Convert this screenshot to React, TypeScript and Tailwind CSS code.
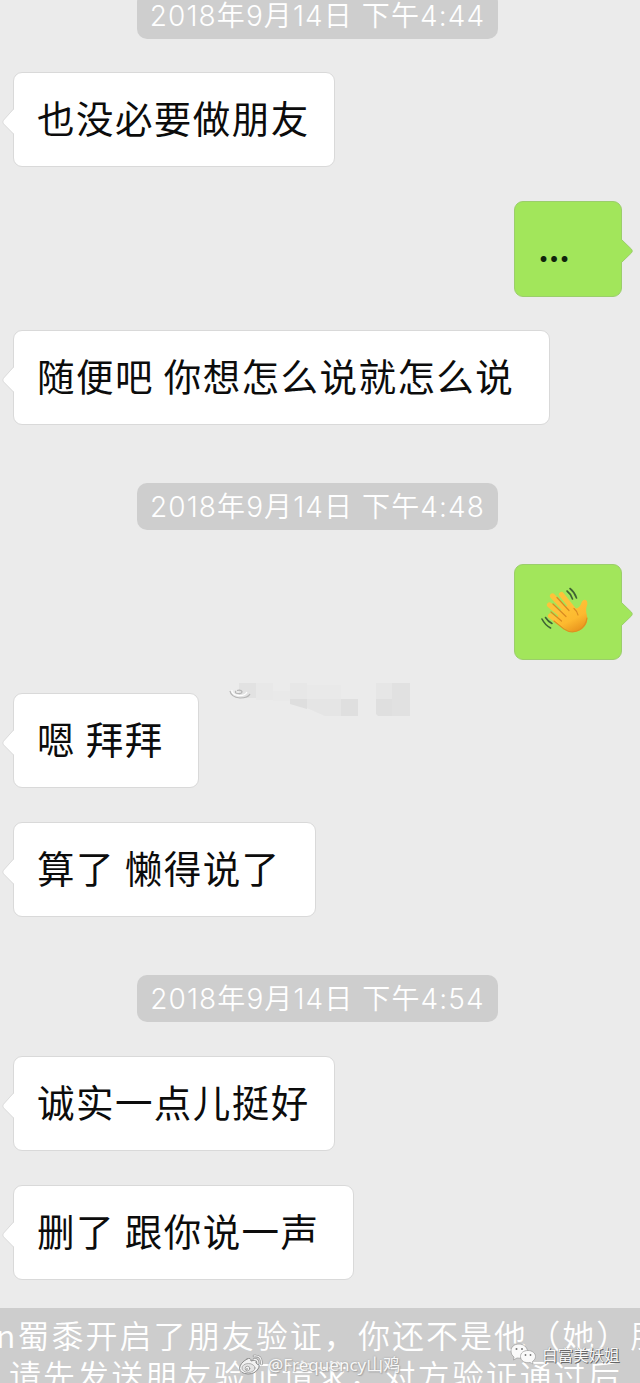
import clsx from 'clsx'

type Item =
  | { kind: 'time'; text: string; gap: string }
  | { kind: 'in'; text: string; gap: string; width: string }
  | { kind: 'out'; text?: string; gap: string }

const ITEMS: Item[] = [
  { kind: 'time', text: '2018年9月14日 下午4:44', gap: '-mt-2' },
  { kind: 'in', text: '也没必要做朋友', gap: 'mt-[33px]', width: 'w-[322px]' },
  { kind: 'out', text: '...', gap: 'mt-[34px]' },
  { kind: 'in', text: '随便吧 你想怎么说就怎么说', gap: 'mt-[33px]', width: 'w-[537px]' },
  { kind: 'time', text: '2018年9月14日 下午4:48', gap: 'mt-[58px]' },
  { kind: 'out', gap: 'mt-[33.5px]' },
  { kind: 'in', text: '嗯 拜拜', gap: 'mt-[33.5px]', width: 'w-[186px]' },
  { kind: 'in', text: '算了 懒得说了', gap: 'mt-[34px]', width: 'w-[303px]' },
  { kind: 'time', text: '2018年9月14日 下午4:54', gap: 'mt-[58px]' },
  { kind: 'in', text: '诚实一点儿挺好', gap: 'mt-[34px]', width: 'w-[322px]' },
  { kind: 'in', text: '删了 跟你说一声', gap: 'mt-[34px]', width: 'w-[341px]' },
]

function TimeLabel({ text, gap }: { text: string; gap: string }) {
  return (
    <div
      className={clsx(
        'ml-[137px] w-[361px] h-[47px] shrink-0 rounded-[10px] bg-[#cecece] flex items-center justify-center',
        "font-['Inter','Noto_Sans_CJK_SC',sans-serif] font-[350] text-[28px] tracking-[1.1px] text-white whitespace-nowrap",
        gap,
      )}
    >
      {text}
    </div>
  )
}

function Incoming({ text, gap, width }: { text: string; gap: string; width: string }) {
  return (
    <div
      className={clsx(
        'relative ml-[13px] h-[95px] shrink-0 rounded-[9px] bg-white border border-[#d9d9d9] pl-[23px] pb-1 flex items-center',
        'text-[37.5px] tracking-[1.45px] text-[#0c0c0c] whitespace-nowrap',
        width,
        gap,
      )}
    >
      <svg className="absolute -left-3 top-[34px] w-[13px] h-[30px]" viewBox="0 0 13 30">
        <path d="M13 1 L1.5 13.2 Q0 15 1.5 16.8 L13 28Z" fill="#fff" />
        <path d="M11.5 2 L1.5 13.2 Q0 15 1.5 16.8 L11.5 27" fill="none" stroke="#dcdcdc" />
      </svg>
      {text}
    </div>
  )
}

function WavingHand() {
  return (
    <svg className="ml-[2px] w-12 h-12" viewBox="0 0 48 48" fill="none" strokeLinecap="round">
      <defs>
        <linearGradient id="skin" x1="0" y1="0" x2="0.5" y2="1">
          <stop offset="0" stopColor="#ffc83c" />
          <stop offset="0.7" stopColor="#fdb92f" />
          <stop offset="1" stopColor="#ec9a20" />
        </linearGradient>
      </defs>
      <g stroke="#fec23a" strokeWidth="5.200">
        <path d="M20.500 7.500 L32 22" />
        <path d="M11.500 9 L27 26" />
        <path d="M8.500 18 L24 31" />
        <path d="M9.500 29 L22 38" />
      </g>
      <path
        d="M20 23 L29 17 L32.500 21 Q37 22.500 39.500 18 L41 14.500 Q43 11.500 46 14 Q47 16 45.500 20 Q44.500 23 46 29 Q47.500 37 41 42 Q33 48 24 42 L15 33Z"
        fill="url(#skin)"
      />
      <g stroke="#d98a22" strokeWidth="1.200">
        <path d="M16 10.500 L28 23.500" />
        <path d="M12 17 L25 29.500" />
        <path d="M10 25 L20.500 34" />
        <path d="M33 21.500 Q36.500 24.500 37 28" />
      </g>
      <path d="M13 34 L23 42 Q31 47.500 39 42.500 Q45 38.500 46 31" stroke="#e0901f" strokeWidth="1.200" />
      <g stroke="#3f6234" strokeWidth="1.600">
        <path d="M26 4 Q30 7 31.500 12" />
        <path d="M29 1.500 Q33.500 5 35.500 11" />
        <path d="M4.500 30.500 Q7 34.500 11 36.500" />
        <path d="M1 32 Q4 38 9.500 41" />
      </g>
    </svg>
  )
}

function Outgoing({ text, gap }: { text?: string; gap: string }) {
  return (
    <div
      className={clsx(
        'relative ml-[514px] w-[108px] h-24 shrink-0 rounded-[9px] bg-[#a2e65b] border border-[#9bce6b] pl-6 pb-px flex items-center',
        'text-[37px] text-[#10240c]',
        gap,
      )}
    >
      <svg className="absolute -right-3 top-[34px] w-[13px] h-[30px]" viewBox="0 0 13 30">
        <path d="M0 2 L11.500 13.200 Q13 15 11.500 16.800 L0 28Z" fill="#a2e65b" />
        <path d="M1 3 L11.500 13.200 Q13 15 11.500 16.800 L1 27" fill="none" stroke="#9bce6b" />
      </svg>
      {text ? <span className="-ml-px pb-[3px] font-medium tracking-[-0.5px]">{text}</span> : <WavingHand />}
    </div>
  )
}

function Mosaic() {
  return (
    <svg className="absolute left-[228px] top-[680px] w-[186px] h-10" viewBox="0 0 186 40">
      <path d="M11 3h17v15h-17z" fill="#e2e2e2" />
      <path d="M28 3h17v17h-17z" fill="#e8e8e8" />
      <path d="M45 11h17v10h-17z" fill="#e9e9e9" />
      <path d="M62 3h17v16h-17z" fill="#e7e7e7" />
      <path d="M79 5h34v14h-34z" fill="#e9e9e9" />
      <path d="M62 19h17v10l-17 -5z" fill="#dedede" />
      <path d="M79 19h34v17h-16l-18 -8z" fill="#e5e5e5" />
      <path d="M113 19h17v17h-17z" fill="#dfdfdf" />
      <path d="M148 3h16v16h-16z" fill="#e6e6e6" />
      <path d="M148 19h16v17h-14l-2 -2z" fill="#dfdfdf" />
      <path d="M164 3h18v33h-18z" fill="#e1e1e1" />
      <g fill="none" stroke="#b5b5b5" strokeWidth="1.200">
        <path d="M2 11 Q3 17 12 18 Q20 18 22 14" />
        <path d="M4 10 Q3 14 10 15.500 Q17 16 19 12" stroke="#fff" />
        <path d="M8 11 Q6 13 10 13.500 Q14 14 14 11.500 Q13 9.500 9 10.500" />
      </g>
    </svg>
  )
}

function WeiboMark() {
  return (
    <div className="absolute left-[238px] top-[1354px] flex items-center gap-1 text-[17px] leading-[22px] text-[#f8f8f8] whitespace-nowrap font-['Noto_Sans','Noto_Sans_CJK_SC',sans-serif] [text-shadow:0_0_2px_#999,1px_1px_1px_#aaa]">
      <svg className="w-[26px] h-[22px]" viewBox="0 0 26 22" fill="none" stroke="#8c8c8c" strokeLinecap="round">
        <path
          d="M9 5 Q13 3 13 7 Q19 5 18 9 Q23 11 20 15 Q17 20 10 20 Q2 19.500 1.500 14.500 Q2 9 9 5Z"
          fill="#f2f2f2"
        />
        <ellipse cx="10.500" cy="14" rx="6.500" ry="4.500" fill="#e4e4e4" strokeWidth="0.600" />
        <circle cx="9.500" cy="14.500" r="2.300" fill="#f7f7f7" strokeWidth="0.700" />
        <circle cx="9" cy="15" r="0.800" fill="#777" stroke="none" />
        <path d="M16 5.500 Q20 5 20 9.500 M16 2 Q24 1 23.500 10" stroke="#888" strokeWidth="2.500" />
        <path d="M16 5.500 Q20 5 20 9.500 M16 2 Q24 1 23.500 10" stroke="#f2f2f2" strokeWidth="1.400" />
      </svg>
      @Frequency山鸡
    </div>
  )
}

function WechatMark() {
  return (
    <div className="absolute left-[510px] top-[1342px] flex items-center gap-[6px] text-[15.500px] leading-[24px] text-[#f8f8f8] whitespace-nowrap [text-shadow:1px_1px_0_#666,0_0_1px_#777]">
      <svg className="w-[26px] h-6" viewBox="0 0 26 24" fill="#fafafa" stroke="#999" strokeWidth="0.700">
        <path d="M9 2 C4 2 1 5 1 9 C1 12 2.500 14 4 15 L3.500 18 L7 16 C13 17 18 14 17.500 9 C17 5 13.500 2 9 2Z" />
        <path d="M18 8.500 C13.500 8.500 10.500 11 10.500 14.500 C10.500 19 15 21.500 20 20.500 L23 22 L22.500 19.500 C24.500 18 25.500 16.500 25.500 14.500 C25.500 11 22 8.500 18 8.500Z" />
        <g fill="#777" stroke="none">
          <circle cx="6.500" cy="7" r="1" />
          <circle cx="12" cy="7" r="1" />
          <circle cx="15.500" cy="13" r="0.900" />
          <circle cx="20.500" cy="13" r="0.900" />
        </g>
      </svg>
      白富美妖姐
    </div>
  )
}

export default function App() {
  return (
    <div className="relative w-[640px] h-[1383px] overflow-hidden bg-[#ebebeb] flex flex-col font-['Noto_Sans_CJK_SC',sans-serif]">
      {ITEMS.map((item, i) => {
        if (item.kind === 'time') return <TimeLabel key={i} text={item.text} gap={item.gap} />
        if (item.kind === 'in') return <Incoming key={i} text={item.text} gap={item.gap} width={item.width} />
        return <Outgoing key={i} text={item.text} gap={item.gap} />
      })}

      {/* friend verification notice, runs off both edges */}
      <div className="mt-7 h-[75px] shrink-0 overflow-hidden bg-[#cdcdcd] pt-[6px] text-[32px] leading-10 tracking-[2.05px] font-[350] text-white whitespace-nowrap">
        <div className="-ml-[4px]">n蜀黍开启了朋友验证，你还不是他（她）朋</div>
        <div className="ml-[9px]">请先发送朋友验证请求，对方验证通过后</div>
      </div>

      <Mosaic />
      <WeiboMark />
      <WechatMark />
    </div>
  )
}
